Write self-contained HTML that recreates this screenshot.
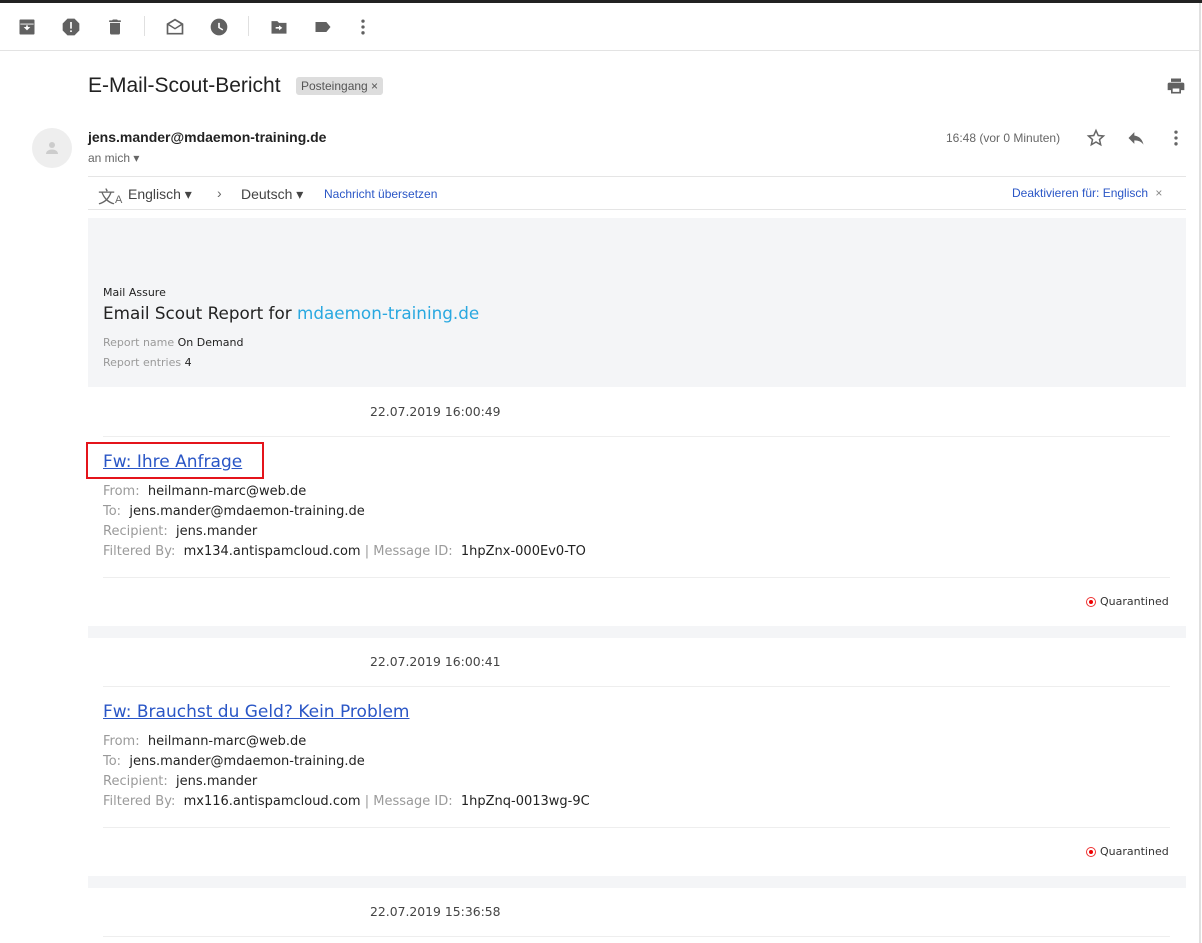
<!DOCTYPE html>
<html><head><meta charset="utf-8"><style>
*{margin:0;padding:0;box-sizing:border-box}
body{width:1202px;height:943px;overflow:hidden;background:#fff;font-family:"Liberation Sans",Arial,sans-serif;position:relative;color:#222}
.a{position:absolute;white-space:nowrap}
.ic{position:absolute}
.g{color:#9a9a9a}
.r{font-family:"DejaVu Sans","Liberation Sans",sans-serif}
</style></head><body>
<div class="a" style="left:0;top:0;width:1202px;height:3px;background:#222"></div>
<div class="a" style="left:1199px;top:3px;width:2px;height:940px;background:#e0e0e0"></div>
<div class="a" style="left:0;top:50px;width:1199px;height:1px;background:#e3e3e3"></div>
<svg class="ic" style="left:17px;top:17px" width="20" height="20" viewBox="0 0 24 24" fill="#616161"><path d="M4 3h16a1 1 0 011 1v16a1 1 0 01-1 1H4a1 1 0 01-1-1V4a1 1 0 011-1zm0 5v1h16V8zm4 4l4 4 4-4h-3V10h-2v2z"/></svg>
<svg class="ic" style="left:61px;top:17px" width="20" height="20" viewBox="0 0 24 24" fill="#616161"><path d="M7.8 2h8.4L22 7.8v8.4L16.2 22H7.8L2 16.2V7.8zM11 6v8h2V6zm0 10v2h2v-2z"/></svg>
<svg class="ic" style="left:105px;top:17px" width="20" height="20" viewBox="0 0 24 24" fill="#616161"><path d="M6 19a2 2 0 002 2h8a2 2 0 002-2V7H6zM19 4h-3.5l-1-1h-5l-1 1H5v2h14z"/></svg>
<div class="a" style="left:144px;top:16px;width:1px;height:20px;background:#e0e0e0"></div>
<svg class="ic" style="left:165px;top:17px" width="20" height="20" viewBox="0 0 24 24" fill="#616161"><path d="M12 2L2 8v13h20V8zm0 2.3L19 8.5 12 13 5 8.5zM4 10l8 5 8-5v9H4z"/></svg>
<svg class="ic" style="left:209px;top:17px" width="20" height="20" viewBox="0 0 24 24" fill="#616161"><path d="M12 2a10 10 0 100 20 10 10 0 000-20zm1 5v5.3l4 2.4-.9 1.5L11 13V7z"/></svg>
<div class="a" style="left:248px;top:16px;width:1px;height:20px;background:#e0e0e0"></div>
<svg class="ic" style="left:269px;top:17px" width="20" height="20" viewBox="0 0 24 24" fill="#616161"><path d="M3 5h7l2 2h9v13H3zm9 5v2H8v2h4v2l4-3z"/></svg>
<svg class="ic" style="left:313px;top:17px" width="20" height="20" viewBox="0 0 24 24" fill="#616161"><path d="M3 6h13l5 6-5 6H3z"/></svg>
<svg class="ic" style="left:353px;top:17px" width="20" height="20" viewBox="0 0 24 24" fill="#616161"><circle cx="12" cy="5" r="2"/><circle cx="12" cy="12" r="2"/><circle cx="12" cy="19" r="2"/></svg>
<div class="a" style="left:88px;top:74px;font-size:21px;color:#222">E-Mail-Scout-Bericht</div>
<div class="a" style="left:296px;top:77px;height:18px;padding:0 5px;background:#ddd;border-radius:3px;font-size:12px;line-height:18px;color:#555">Posteingang &#215;</div>
<svg class="ic" style="left:1166px;top:76px" width="20" height="20" viewBox="0 0 24 24" fill="#616161"><path d="M6 3h12v4H6zM4 8h16a2 2 0 012 2v7h-4v4H6v-4H2v-7a2 2 0 012-2zm4 7v4h8v-4z"/></svg>
<div class="a" style="left:32px;top:128px;width:40px;height:40px;border-radius:50%;background:#eee"></div>
<svg class="ic" style="left:43px;top:139px" width="18" height="18" viewBox="0 0 24 24" fill="#ccc"><circle cx="12" cy="8" r="4"/><path d="M4 20c0-4 4-6 8-6s8 2 8 6z"/></svg>
<div class="a" style="left:88px;top:129px;font-size:14px;font-weight:bold;color:#222">jens.mander@mdaemon-training.de</div>
<div class="a" style="left:88px;top:151px;font-size:12px;color:#666">an mich &#9662;</div>
<div class="a" style="left:946px;top:131px;font-size:12px;color:#666">16:48 (vor 0 Minuten)</div>
<svg class="ic" style="left:1086px;top:128px" width="20" height="20" viewBox="0 0 24 24" fill="none" stroke="#666" stroke-width="1.8"><path d="M12 3l2.7 6 6.3.6-4.8 4.2 1.4 6.3L12 16.8 6.4 20.1l1.4-6.3L3 9.6 9.3 9z"/></svg>
<svg class="ic" style="left:1126px;top:128px" width="20" height="20" viewBox="0 0 24 24" fill="#666"><path d="M10 9V5l-7 7 7 7v-4.1c5 0 8.5 1.6 11 5.1-1-5-4-10-11-11z"/></svg>
<svg class="ic" style="left:1166px;top:128px" width="20" height="20" viewBox="0 0 24 24" fill="#666"><circle cx="12" cy="5" r="2"/><circle cx="12" cy="12" r="2"/><circle cx="12" cy="19" r="2"/></svg>
<div class="a" style="left:88px;top:176px;width:1098px;height:1px;background:#e5e5e5"></div>
<div class="a" style="left:88px;top:209px;width:1098px;height:1px;background:#e5e5e5"></div>
<div class="a" style="left:98px;top:183px;font-size:17px;color:#666">文<span style="font-size:11px">A</span></div>
<div class="a" style="left:128px;top:186px;font-size:14px;color:#444">Englisch &#9662;</div>
<div class="a" style="left:217px;top:185px;font-size:14px;color:#666">&#8250;</div>
<div class="a" style="left:241px;top:186px;font-size:14px;color:#444">Deutsch &#9662;</div>
<div class="a" style="left:324px;top:187px;font-size:12px;color:#2a56c6">Nachricht übersetzen</div>
<div class="a" style="left:1012px;top:186px;font-size:12px;color:#2a56c6">Deaktivieren für: Englisch <span style="color:#888;margin-left:4px">&#215;</span></div>
<div class="a" style="left:88px;top:218px;width:1098px;height:169px;background:#f4f5f7"></div>
<div class="a r" style="left:103px;top:286px;font-size:11px;color:#222">Mail Assure</div>
<div class="a r" style="left:103px;top:303px;font-size:16.8px;color:#222">Email Scout Report for <span style="color:#29a8e0">mdaemon-training.de</span></div>
<div class="a r" style="left:103px;top:336px;font-size:11px"><span class="g">Report name</span> On Demand</div>
<div class="a r" style="left:103px;top:356px;font-size:11px"><span class="g">Report entries</span> 4</div>

<div class="a r" style="left:370px;top:404px;font-size:12.4px;color:#444">22.07.2019 16:00:49</div>
<div class="a" style="left:103px;top:436px;width:1067px;height:1px;background:#eee"></div>
<div class="a" style="left:86px;top:442px;width:178px;height:37px;border:2px solid #e4141b"></div>
<div class="a r" style="left:103px;top:452px;font-size:17px;color:#2a56c6;text-decoration:underline">Fw: Ihre Anfrage</div>
<div class="a r" style="left:103px;top:482px;font-size:13px;line-height:20px"><span class="g">From:</span>&nbsp; heilmann-marc@web.de<br><span class="g">To:</span>&nbsp; jens.mander@mdaemon-training.de<br><span class="g">Recipient:</span>&nbsp; jens.mander<br><span class="g">Filtered By:</span>&nbsp; mx134.antispamcloud.com <span class="g">|</span> <span class="g">Message ID:</span>&nbsp; 1hpZnx-000Ev0-TO</div>
<div class="a" style="left:103px;top:577px;width:1067px;height:1px;background:#eee"></div>
<div class="a" style="left:1086px;top:597px;width:10px;height:10px;border:1.5px solid #e33;border-radius:50%"></div>
<div class="a" style="left:1089px;top:600px;width:4px;height:4px;background:#e00;border-radius:50%"></div>
<div class="a r" style="left:1100px;top:595px;font-size:11px;color:#333">Quarantined</div>
<div class="a" style="left:88px;top:626px;width:1098px;height:12px;background:#f4f5f7"></div>

<div class="a r" style="left:370px;top:654px;font-size:12.4px;color:#444">22.07.2019 16:00:41</div>
<div class="a" style="left:103px;top:686px;width:1067px;height:1px;background:#eee"></div>
<div class="a r" style="left:103px;top:702px;font-size:17px;color:#2a56c6;text-decoration:underline">Fw: Brauchst du Geld? Kein Problem</div>
<div class="a r" style="left:103px;top:732px;font-size:13px;line-height:20px"><span class="g">From:</span>&nbsp; heilmann-marc@web.de<br><span class="g">To:</span>&nbsp; jens.mander@mdaemon-training.de<br><span class="g">Recipient:</span>&nbsp; jens.mander<br><span class="g">Filtered By:</span>&nbsp; mx116.antispamcloud.com <span class="g">|</span> <span class="g">Message ID:</span>&nbsp; 1hpZnq-0013wg-9C</div>
<div class="a" style="left:103px;top:827px;width:1067px;height:1px;background:#eee"></div>
<div class="a" style="left:1086px;top:847px;width:10px;height:10px;border:1.5px solid #e33;border-radius:50%"></div>
<div class="a" style="left:1089px;top:850px;width:4px;height:4px;background:#e00;border-radius:50%"></div>
<div class="a r" style="left:1100px;top:845px;font-size:11px;color:#333">Quarantined</div>
<div class="a" style="left:88px;top:876px;width:1098px;height:12px;background:#f4f5f7"></div>

<div class="a r" style="left:370px;top:904px;font-size:12.4px;color:#444">22.07.2019 15:36:58</div>
<div class="a" style="left:103px;top:936px;width:1067px;height:1px;background:#eee"></div>
</body></html>
